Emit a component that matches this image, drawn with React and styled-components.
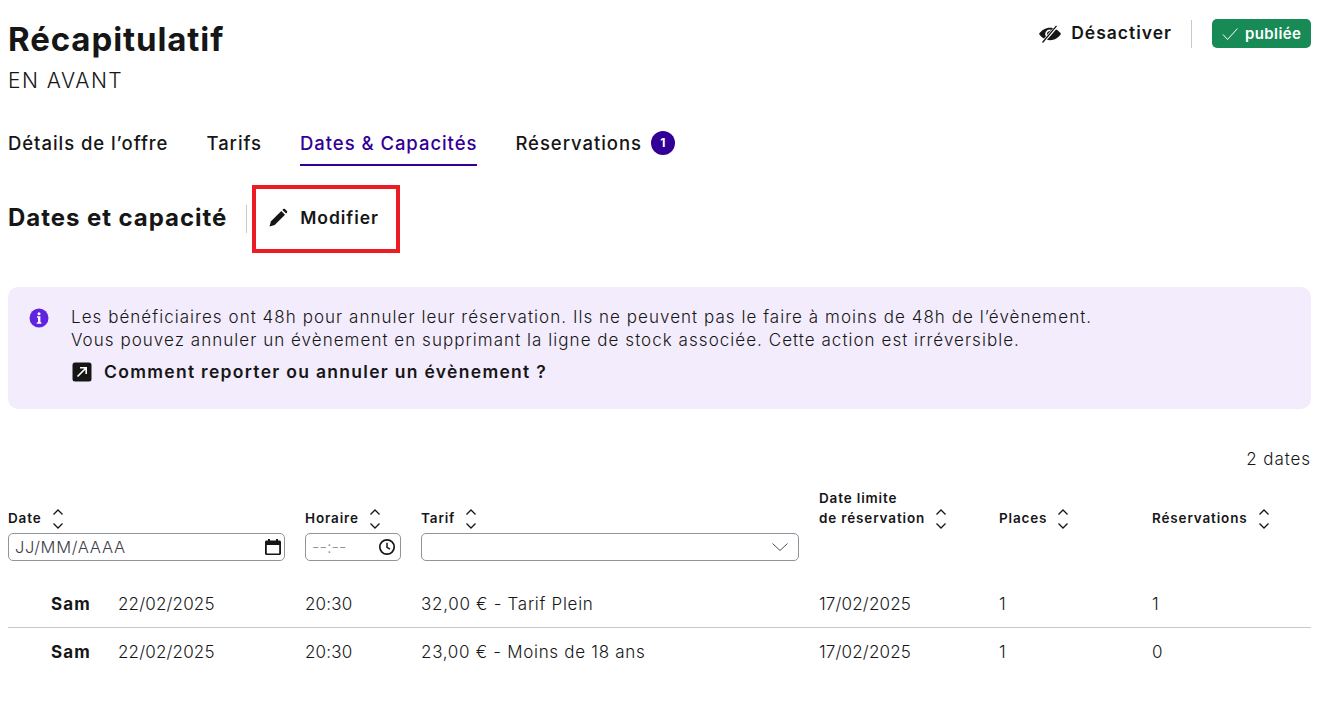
import React from "react";
import styled, { createGlobalStyle } from "styled-components";

const GlobalStyle = createGlobalStyle`
  html, body { margin: 0; padding: 0; background: #fff; }
  body {
    font-family: "Inter", "Noto Sans", "Liberation Sans", sans-serif;
    color: #161617;
  }
  * { box-sizing: border-box; }
`;

const COLUMNS = "297px 116px 398px 180px 153px 1fr";

const rows = [
  { price: "32,00 € - Tarif Plein", bookings: "1" },
  { price: "23,00 € - Moins de 18 ans", bookings: "0" },
];

const SortIcon = () => (
  <SortSvg viewBox="0 0 12 22" fill="none" stroke="#161617" strokeWidth="1.3">
    <path d="M1.5 6.5 6 2l4.5 4.5" />
    <path d="M1.5 15.5 6 20l4.5-4.5" />
  </SortSvg>
);

const EyeOff = () => (
  <svg width="22" height="18" viewBox="0 0 22 18">
    <path fill="#161617" d="M0 9C2.5 5.3 6.5 2.8 11 2.8S19.5 5.3 22 9c-2.5 3.7-6.5 6.2-11 6.200S2.5 12.7 0 9z" />
    <path fill="none" stroke="#fff" strokeWidth="1.6" d="M8 11.5A3.8 3.8 0 0 1 11.5 5.3" />
    <path fill="none" stroke="#fff" strokeWidth="3.2" d="M4 17 18 1" />
    <path fill="none" stroke="#161617" strokeWidth="1.3" d="M3.5 17.5 17.5 0.8" />
  </svg>
);

const Pencil = () => (
  <svg width="20" height="20" viewBox="0 0 20 20">
    <path fill="#161617" d="M1.5 18.5 3 13.3 13.3 3l3.700 3.700L6.700 17z" />
    <path fill="#161617" d="M14.4 1.900 15.200 1.100c.5-.5 1.200-.5 1.700 0l2 2c.5.5.5 1.200 0 1.700l-.8.8z" />
  </svg>
);

const InfoIcon = () => (
  <InfoSvg width="20" height="20" viewBox="0 0 20 20">
    <circle cx="10" cy="10" r="9.5" fill="#6123df" />
    <circle cx="10" cy="5.8" r="1.5" fill="#fff" />
    <path fill="#fff" d="M8 8.300h3.400v6h1v1.400H7.800v-1.400h1.200V9.700H8z" />
  </InfoSvg>
);

const ExternalIcon = () => (
  <svg width="20" height="20" viewBox="0 0 20 20">
    <rect x="0.5" y="0.5" width="19" height="19" rx="2.5" fill="#161617" />
    <path d="M5.5 14.500 14 6M8 5.800h6.200V12" stroke="#fff" strokeWidth="1.6" fill="none" />
  </svg>
);

const Calendar = () => (
  <svg width="18" height="18" viewBox="0 0 18 18">
    <path
      fill="#161617"
      d="M4 1h2v1.500h6V1h2v1.500h1.500c.8 0 1.500.7 1.500 1.500v11.500c0 .8-.7 1.500-1.500 1.500h-13C1.700 17 1 16.300 1 15.500V4c0-.8.7-1.500 1.500-1.500H4zM2.800 7v8.400h12.400V7z"
    />
  </svg>
);

const Clock = () => (
  <svg width="18" height="18" viewBox="0 0 18 18" fill="none" stroke="#161617">
    <circle cx="9" cy="9" r="7.2" strokeWidth="1.7" />
    <path d="M9 4.800V9.300l3 1.800" strokeWidth="1.5" />
  </svg>
);

const App = () => (
  <Page>
    <GlobalStyle />
    <Header>
      <div>
        <Title>Récapitulatif</Title>
        <Subtitle>EN AVANT</Subtitle>
      </div>
      <HeaderActions>
        <DisableButton>
          <EyeOff />
          <DisableLabel>Désactiver</DisableLabel>
        </DisableButton>
        <Divider />
        <StatusTag>
          <svg width="17" height="14" viewBox="0 0 17 14" fill="none" stroke="#fff" strokeWidth="1">
            <path d="M1 7.500 5.500 12.500 15.500 1.500" />
          </svg>
          publiée
        </StatusTag>
      </HeaderActions>
    </Header>

    <Tabs>
      <Tab>Détails de l’offre</Tab>
      <Tab>Tarifs</Tab>
      <Tab $active>Dates &amp; Capacités</Tab>
      <Tab>
        Réservations
        <Count>1</Count>
      </Tab>
    </Tabs>

    <SectionRow>
      <SectionTitle>Dates et capacité</SectionTitle>
      <Divider />
      <EditButton>
        <Pencil />
        Modifier
      </EditButton>
    </SectionRow>

    <Callout>
      <InfoIcon />
      <CalloutBody>
        <CalloutText>
          Les bénéficiaires ont 48h pour annuler leur réservation. Ils ne peuvent pas le faire à moins de 48h de l’évènement.
          <br />
          Vous pouvez annuler un évènement en supprimant la ligne de stock associée. Cette action est irréversible.
        </CalloutText>
        <CalloutLink>
          <ExternalIcon />
          Comment reporter ou annuler un évènement ?
        </CalloutLink>
      </CalloutBody>
    </Callout>

    <DateCount>2 dates</DateCount>

    <HeadRow>
      <HeadCell>
        <HeadLabel>Date <SortIcon /></HeadLabel>
        <Field $padRight={2}>
          <FieldText>JJ/MM/AAAA</FieldText>
          <Calendar />
        </Field>
      </HeadCell>
      <HeadCell>
        <HeadLabel>Horaire <SortIcon /></HeadLabel>
        <Field $padRight={4}>
          <FieldText $muted>--:--</FieldText>
          <Clock />
        </Field>
      </HeadCell>
      <HeadCell>
        <HeadLabel>Tarif <SortIcon /></HeadLabel>
        <Field $padRight={9}>
          <span />
          <svg width="18" height="10" viewBox="0 0 18 10" fill="none" stroke="#3d3e48" strokeWidth="0.9">
            <path d="M1.500 1.500 9 8.500 16.500 1.500" />
          </svg>
        </Field>
      </HeadCell>
      <HeadCell $top>
        <HeadLabel>
          <span>Date limite<br />de réservation</span>
          <SortIcon />
        </HeadLabel>
      </HeadCell>
      <HeadCell $top>
        <HeadLabel $spaced>Places <SortIcon /></HeadLabel>
      </HeadCell>
      <HeadCell $top>
        <HeadLabel $spaced>Réservations <SortIcon /></HeadLabel>
      </HeadCell>
    </HeadRow>

    {rows.map((row, i) => (
      <DataRow key={row.price} $last={i === rows.length - 1}>
        <DateCell>
          <Day>Sam</Day>
          <span>22/02/2025</span>
        </DateCell>
        <span>20:30</span>
        <Price>{row.price}</Price>
        <span>17/02/2025</span>
        <span>1</span>
        <span>{row.bookings}</span>
      </DataRow>
    ))}
  </Page>
);

export default App;

const Page = styled.div`
  width: 1328px;
  height: 710px;
  padding: 0 17px 0 8px;
  overflow: hidden;
`;

const Header = styled.header`
  display: flex;
  justify-content: space-between;
  align-items: flex-start;
  padding-top: 19px;
`;

const Title = styled.h1`
  margin: 0;
  font-size: 33px;
  line-height: 40px;
  font-weight: 700;
  letter-spacing: 0.9px;
`;

const Subtitle = styled.div`
  margin-top: 2px;
  font-size: 21px;
  line-height: 40px;
  font-weight: 300;
  letter-spacing: 1.5px;
`;

const HeaderActions = styled.div`
  display: flex;
  align-items: center;
  gap: 20px;
`;

const DisableButton = styled.div`
  display: flex;
  align-items: center;
  gap: 10px;
  margin-right: -1px;
  font-size: 17.5px;
  font-weight: 600;
  letter-spacing: 1px;
`;

const DisableLabel = styled.span`
  margin-bottom: 3px;
`;

const Divider = styled.div`
  width: 1px;
  height: 28px;
  background: #c8c8cd;
`;

const StatusTag = styled.div`
  display: flex;
  align-items: center;
  gap: 6px;
  width: 99px;
  height: 29px;
  padding-left: 10px;
  border-radius: 5px;
  background: #178a55;
  color: #fff;
  font-size: 15px;
  font-weight: 600;
  letter-spacing: 0.4px;
`;

const Tabs = styled.nav`
  display: flex;
  gap: 38px;
  margin-top: 21px;
`;

const Tab = styled.div`
  display: flex;
  align-items: center;
  gap: 9px;
  height: 44px;
  padding-bottom: 1px;
  font-size: 18.5px;
  font-weight: 500;
  letter-spacing: 0.95px;
  color: ${(p) => (p.$active ? "#320096" : "#161617")};
  border-bottom: 2px solid ${(p) => (p.$active ? "#320096" : "transparent")};
`;

const Count = styled.span`
  display: flex;
  align-items: center;
  justify-content: center;
  width: 24px;
  height: 24px;
  border-radius: 50%;
  background: #320096;
  color: #fff;
  font-size: 12px;
  font-weight: 700;
  letter-spacing: 0;
`;

const SectionRow = styled.div`
  display: flex;
  align-items: center;
  margin-top: 19px;
  height: 68px;
`;

const SectionTitle = styled.h2`
  margin: 0 19px 0 0;
  padding-bottom: 3px;
  font-size: 24px;
  font-weight: 700;
  letter-spacing: 0.95px;
`;

const EditButton = styled.div`
  display: flex;
  align-items: center;
  gap: 12px;
  width: 148px;
  height: 68px;
  margin-left: 5px;
  padding: 0 0 3px 12px;
  border: 4px solid #ed1c24;
  font-size: 17.5px;
  font-weight: 600;
  letter-spacing: 0.95px;
  white-space: nowrap;
`;

const Callout = styled.section`
  display: flex;
  gap: 22px;
  height: 122px;
  margin-top: 34px;
  padding: 19px 20px 0 21px;
  border-radius: 10px;
  background: #f3ecfd;
`;

const InfoSvg = styled.svg`
  flex: none;
  margin-top: 2px;
`;

const CalloutBody = styled.div`
  display: flex;
  flex-direction: column;
`;

const CalloutText = styled.p`
  margin: 0;
  font-size: 17px;
  line-height: 23px;
  font-weight: 300;
  letter-spacing: 1.04px;
  white-space: nowrap;
`;

const CalloutLink = styled.div`
  display: flex;
  align-items: center;
  gap: 12px;
  margin-top: 9px;
  margin-left: 1px;
  font-size: 17.5px;
  font-weight: 600;
  letter-spacing: 1.3px;
`;

const DateCount = styled.div`
  margin-top: 38px;
  text-align: right;
  font-size: 17px;
  line-height: 24px;
  font-weight: 300;
  letter-spacing: 0.9px;
`;

const HeadRow = styled.div`
  display: grid;
  grid-template-columns: ${COLUMNS};
  height: 73px;
  margin-top: 17px;
`;

const HeadCell = styled.div`
  display: flex;
  flex-direction: column;
  justify-content: ${(p) => (p.$top ? "flex-start" : "flex-end")};
  padding-right: ${(p) => (p.$top ? "0" : "20px")};
`;

const HeadLabel = styled.div`
  display: flex;
  align-items: flex-end;
  gap: 10px;
  margin-top: ${(p) => (p.$spaced ? "20px" : "0")};
  font-size: 13.5px;
  line-height: 20px;
  font-weight: 600;
  letter-spacing: 0.85px;
`;

const SortSvg = styled.svg`
  width: 12px;
  height: 22px;
  flex: none;
  margin-bottom: -2px;
`;

const Field = styled.div`
  display: flex;
  justify-content: space-between;
  align-items: center;
  height: 28px;
  margin-top: 5px;
  padding: 0 ${(p) => p.$padRight}px 0 6px;
  border: 1px solid #90949d;
  border-radius: 5px;
`;

const FieldText = styled.span`
  padding-bottom: 1px;
  font-size: 16.5px;
  font-weight: 300;
  color: ${(p) => (p.$muted ? "#90949d" : "#3d3e48")};
  letter-spacing: ${(p) => (p.$muted ? "0" : "0.7px")};
`;

const DataRow = styled.div`
  display: grid;
  grid-template-columns: ${COLUMNS};
  align-items: center;
  height: 48px;
  margin-top: ${(p) => (p.$last ? "0" : "19px")};
  border-bottom: ${(p) => (p.$last ? "none" : "1px solid #c8c8cd")};
  font-size: 17px;
  font-weight: 300;
  letter-spacing: 0.16px;
`;

const DateCell = styled.div`
  display: flex;
  padding-left: 43px;
`;

const Day = styled.span`
  width: 67px;
  font-weight: 700;
  letter-spacing: 1.1px;
`;

const Price = styled.span`
  letter-spacing: 0.7px;
`;
